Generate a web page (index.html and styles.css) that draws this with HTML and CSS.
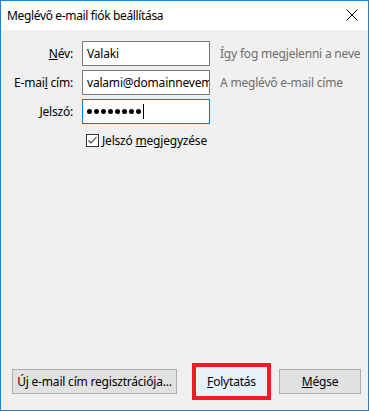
FILE: index.html
```html
<!DOCTYPE html>
<html lang="hu">
<head>
<meta charset="utf-8">
<title>Meglévő e-mail fiók beállítása</title>
<link rel="stylesheet" href="styles.css">
</head>
<body>
<div class="window">
  <div class="titlebar">
    <span class="title">Meglévő e-mail fiók beállítása</span>
    <svg class="close" width="12" height="12" viewBox="0 0 12 12"><path d="M0.5 0.5 L11.5 11.5 M11.5 0.5 L0.5 11.5" stroke="#000" stroke-width="1" fill="none"/></svg>
  </div>
  <div class="content">
    <div class="form">
      <label class="label"><u>N</u>év:</label>
      <div class="input"><span class="value">Valaki</span></div>
      <span class="hint">Így fog megjelenni a neve</span>

      <label class="label">E-mai<u>l</u> cím:</label>
      <div class="input"><span class="value">valami@domainnevem</span></div>
      <span class="hint">A meglévő e-mail címe</span>

      <label class="label"><u>J</u>elszó:</label>
      <div class="input focused"><span class="dots"><i class="dot"></i><i class="dot"></i><i class="dot"></i><i class="dot"></i><i class="dot"></i><i class="dot"></i><i class="dot"></i><i class="dot"></i></span><span class="caret"></span></div>
      <span class="hint"></span>

      <span></span>
      <div class="check-row">
        <span class="checkbox"><svg width="11" height="11" viewBox="0 0 11 11"><path d="M1.5 5.5 L4 8 L9.5 2" stroke="#333" stroke-width="1.1" fill="none"/></svg></span>
        <span class="check-label">Jelszó <u>m</u>egjegyzése</span>
      </div>
    </div>
    <div class="footer">
      <button class="btn btn-new">Ú<u>j</u> e-mail cím regisztrációja...</button>
      <span class="highlight"><button class="btn btn-default"><u>F</u>olytatás</button></span>
      <button class="btn btn-cancel"><u>M</u>égse</button>
    </div>
  </div>
</div>
</body>
</html>
```
FILE: styles.css
```css
html, body {
  margin: 0;
  padding: 0;
  background: #f0f0f0;
}
body {
  font-family: "Noto Sans", "Open Sans", sans-serif;
  font-size: 12px;
  color: #000;
}
.window {
  box-sizing: border-box;
  width: 369px;
  height: 411px;
  border: 1px solid #1883d7;
  display: flex;
  flex-direction: column;
  background: #f0f0f0;
}
.titlebar {
  height: 29px;
  background: #fff;
  display: flex;
  align-items: center;
  justify-content: space-between;
  padding: 0 10px 0 6px;
  flex-shrink: 0;
}
.title {
  font-size: 12px;
  letter-spacing: -0.35px;
  padding-bottom: 1px;
}
.close {
  display: block;
  margin-top: -1px;
}
.content {
  flex: 1;
  display: flex;
  flex-direction: column;
  padding: 11px 0 11px 0;
}
.form {
  display: grid;
  grid-template-columns: 72px 128px auto;
  column-gap: 9px;
  row-gap: 4px;
  align-items: center;
  letter-spacing: -0.2px;
}
.label {
  justify-self: end;
  white-space: nowrap;
  padding-bottom: 1px;
}
.form .input {
  box-sizing: border-box;
  height: 25px;
  width: 128px;
  border: 1px solid #7a7a7a;
  background: #fff;
  display: flex;
  align-items: center;
  padding-left: 4px;
  overflow: hidden;
  white-space: nowrap;
}
.input.focused {
  border-color: #0078d7;
}
.value {
  padding-bottom: 1px;
}
.dots {
  display: flex;
  align-items: center;
  gap: 2px;
}
.dot {
  display: block;
  width: 5px;
  height: 5px;
  border-radius: 50%;
  background: #000;
}
.caret {
  display: inline-block;
  width: 1px;
  height: 15px;
  background: #000;
  margin-left: 2px;
}
.hint {
  color: #6d6d6d;
  white-space: nowrap;
  margin-left: 1px;
  padding-bottom: 1px;
}
.check-row {
  grid-column: 2 / span 2;
  display: flex;
  align-items: center;
  margin-top: 4px;
  padding-left: 4px;
}
.checkbox {
  box-sizing: border-box;
  width: 13px;
  height: 13px;
  border: 1px solid #333;
  background: #fff;
  display: flex;
  align-items: center;
  justify-content: center;
  margin-right: 3px;
}
.checkbox svg { display: block; }
.footer {
  margin-top: auto;
  display: flex;
  align-items: center;
  padding-left: 11px;
}
.btn {
  box-sizing: border-box;
  height: 25px;
  font: inherit;
  font-size: 12px;
  letter-spacing: -0.2px;
  color: #000;
  background: #e1e1e1;
  border: 1px solid #adadad;
  padding: 0 0 1px 0;
  margin: 0;
}
.btn-new {
  width: 165px;
}
.highlight {
  display: inline-block;
  margin-left: 15px;
  border: 4px solid #ed1c24;
  padding: 2px;
  margin-top: -1px;
  margin-bottom: -1px;
}
.btn-default {
  display: block;
  width: 67px;
  background: #e5f1fb;
  border-color: #e5f1fb;
}
.btn-cancel {
  width: 82px;
  margin-left: 8px;
}
```
